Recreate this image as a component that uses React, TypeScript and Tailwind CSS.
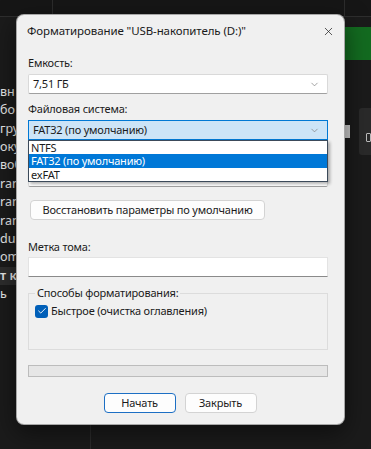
import { Check, ChevronDown, X } from 'lucide-react'

const sideItems = ['вн', 'бо', 'гру', 'оку', 'воб', 'ran', 'ran', 'ran', 'dui', 'om', 'т к', 'ь']

function Combo({ value, active }: { value?: string; active?: boolean }) {
  return (
    <div
      className={
        active
          ? 'flex h-[20px] items-center justify-between border border-[#0078d4] bg-[#cce4f7] pl-[4px] pr-[7px]'
          : 'flex h-[20px] items-center justify-between rounded-[2px] border border-[#d9d9d9] border-b-[#a0a0a0] bg-white pl-[4px] pr-[7px]'
      }
    >
      <span>{value}</span>
      <ChevronDown size={11} strokeWidth={1.5} className="text-[#7a7a7a]" />
    </div>
  )
}

function Button({ label, primary, wide }: { label: string; primary?: boolean; wide?: boolean }) {
  return (
    <button
      className={
        'h-[20px] whitespace-nowrap rounded-[4px] border bg-[#fdfdfd] ' +
        (primary ? 'border-[#1c6fc4] ' : 'border-[#d3d3d3] ') +
        (wide ? 'w-[235px]' : 'w-[72px]')
      }
    >
      {label}
    </button>
  )
}

export default function App() {
  return (
    <div className="relative h-[449px] w-[371px] overflow-hidden bg-[#1b1b1b] font-['Noto_Sans',sans-serif] text-[11px] tracking-[-0.2px] text-[#1b1b1b]">
      {/* app behind the dialog */}
      <div className="flex h-[17px] border-b border-[#2e2e2e] bg-[#161616]">
        <div className="w-[53px] border-r border-[#2c2c2c]" />
        <div className="w-[292px] border-r border-[#2c2c2c]" />
      </div>
      <div className="flex">
        <div className="flex w-[16px] flex-col overflow-hidden pt-[66px]">
          {sideItems.map((t, i) => (
            <div
              key={i}
              className={
                'flex h-[18.4px] items-center overflow-hidden whitespace-nowrap text-[12.5px] tracking-normal text-[#e8e8e8] ' +
                (i === 10 ? 'bg-[#2d2d2d] font-semibold' : '')
              }
            >
              {t}
            </div>
          ))}
        </div>
        <div className="w-[329px]" />
        <div className="flex flex-1 flex-col pt-[10px]">
          <div className="h-[33px] bg-[#136b20]" />
          <div className="mt-[48px] flex items-start">
            <div className="mt-[17px] h-[13px] w-[7px] bg-[#c9c9c9]" />
            <div className="ml-[9px] flex h-[47px] w-[12px] items-end rounded-l-[3px] bg-[#2a2a2a] pb-[13px] pl-[7px]">
              <div className="h-[9px] w-[6px] rounded-[1px] border border-[#bbbbbb]" />
            </div>
          </div>
        </div>
      </div>
      <div className="absolute bottom-0 left-[90px] h-[25px] w-px bg-[#2c2c2c]" />

      {/* dialog */}
      <div className="absolute left-[16px] top-[14px] w-[329px] rounded-[8px] border border-[#3a3a3a]/40 bg-[#f0f0f0] pb-[11px] pl-[11px] pr-[16px] shadow-[0_8px_24px_rgba(0,0,0,0.5)]">
        <div className="flex h-[32px] items-center justify-between">
          <span className="-ml-[1px] text-[11.5px] tracking-[-0.1px] text-[#1a1a1a]">Форматирование "USB-накопитель (D:)"</span>
          <X size={13} strokeWidth={1.3} className="mr-[-7px] text-[#1a1a1a]" />
        </div>

        <div className="mt-[8px] leading-[16px]">Емкость:</div>
        <div className="mt-[3px]">
          <Combo value="7,51 ГБ" />
        </div>

        <div className="mt-[7px] leading-[16px]">Файловая система:</div>
        <div className="relative mt-[3px]">
          <Combo value="FAT32 (по умолчанию)" active />
          <div className="absolute left-0 right-0 top-[20px] z-10 border border-[#3c4a5a] bg-white leading-[13px] shadow-[2px_2px_3px_rgba(0,0,0,0.3)]">
            <div className="h-[13px] pl-[2px]">NTFS</div>
            <div className="h-[14px] bg-[#0078d7] pl-[2px] text-white">FAT32 (по умолчанию)</div>
            <div className="h-[13px] pl-[2px]">exFAT</div>
          </div>
        </div>

        {/* allocation size row, hidden under the open list */}
        <div className="mt-[8px] h-[16px]" />
        <div className="mt-[3px]">
          <Combo />
        </div>

        <div className="mt-[13px] pl-[2px]">
          <Button label="Восстановить параметры по умолчанию" wide />
        </div>

        <div className="mt-[19px] leading-[16px]">Метка тома:</div>
        <div className="mt-[2px] h-[20px] border border-[#e3e3e3] border-b-[#8a8a8a] bg-white" />

        <fieldset className="mt-[8px] h-[65px] border border-[#dcdcdc] pl-[6px]">
          <legend className="px-[2px] leading-[16px]">Способы форматирования:</legend>
          <div className="mt-[2px] flex items-center gap-[3px]">
            <div className="flex h-[13px] w-[13px] items-center justify-center rounded-[3px] bg-[#005fb8]">
              <Check size={10} strokeWidth={2.2} className="text-white" />
            </div>
            <span>Быстрое (очистка оглавления)</span>
          </div>
        </fieldset>

        <div className="mt-[15px] h-[12px] border border-[#bcbcbc] bg-[#e6e6e6]" />

        <div className="mt-[16px] flex justify-center gap-[9px] pl-[4px]">
          <Button label="Начать" primary />
          <Button label="Закрыть" />
        </div>
      </div>
    </div>
  )
}
